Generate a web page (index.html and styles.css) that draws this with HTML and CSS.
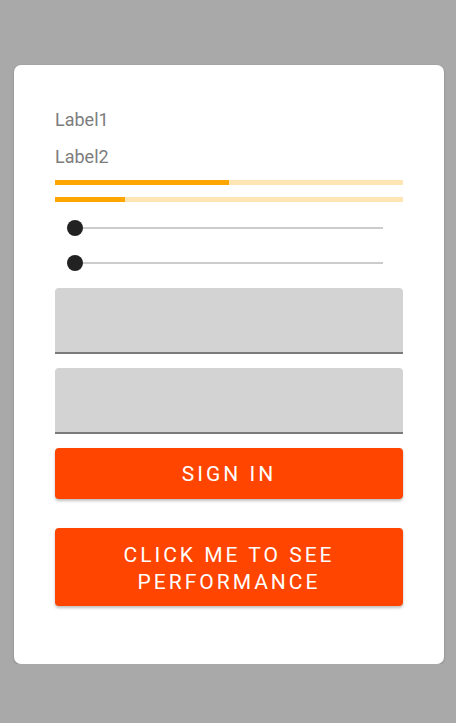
FILE: index.html
```html
<!DOCTYPE html>
<html lang="en">
<head>
    <meta charset="UTF-8">
    <meta name="viewport" content="width=device-width, initial-scale=1.0">
    <title>Sign in</title>
    <link rel="stylesheet" href="styles.css">
</head>
<body>

    <div class="card">
        <div class="label">Label1</div>
        <div class="label">Label2</div>

        <div class="progress first"><div class="progress-fill" style="width: 50%"></div></div>
        <div class="progress"><div class="progress-fill" style="width: 20%"></div></div>

        <div class="slider"><span class="thumb"></span></div>
        <div class="slider"><span class="thumb"></span></div>

        <div class="entry"></div>
        <div class="entry"></div>

        <button class="btn">Sign in</button>
        <button class="btn tall">Click me to see performance</button>
    </div>

</body>
</html>
```

FILE: styles.css
```css
body {
    font-family: Roboto, "Noto Sans", sans-serif;
    background-color: #a9a9a9;
    margin: 0;
    padding: 65px 12px 0 14px;
}
.card {
    background-color: white;
    border-radius: 7px;
    padding: 45px 41px 58px 41px;
    box-shadow: 0 1px 3px rgba(0, 0, 0, 0.2);
}
.label {
    font-size: 18px;
    line-height: 20px;
    color: #7d7d7d;
}
.label + .label {
    margin-top: 17px;
}
.progress {
    height: 5px;
    background-color: #ffe5b4;
    margin-top: 12px;
}
.progress.first {
    margin-top: 13px;
}
.progress-fill {
    height: 100%;
    background-color: #ffa500;
}
.slider {
    position: relative;
    height: 2px;
    margin: 25px 20px 0 20px;
    background-color: #cccccc;
}
.slider + .slider {
    margin-top: 33px;
}
.thumb {
    position: absolute;
    left: -8px;
    top: -7px;
    width: 16px;
    height: 16px;
    border-radius: 50%;
    background-color: #222;
}
.entry {
    height: 64px;
    margin-top: 24px;
    background-color: #d3d3d3;
    border-radius: 4px 4px 0 0;
    border-bottom: 2px solid #7b7b7b;
}
.entry + .entry {
    margin-top: 14px;
}
.btn {
    display: block;
    width: 100%;
    height: 51px;
    margin-top: 14px;
    border: none;
    border-radius: 4px;
    background-color: #ff4500;
    color: white;
    font-family: Roboto, sans-serif;
    font-size: 21px;
    letter-spacing: 3px;
    text-transform: uppercase;
    box-shadow: 0 2px 3px rgba(0, 0, 0, 0.25);
    cursor: pointer;
}
.btn.tall {
    height: 78px;
    margin-top: 29px;
    padding: 4px 50px 0 50px;
    line-height: 27px;
}
```
